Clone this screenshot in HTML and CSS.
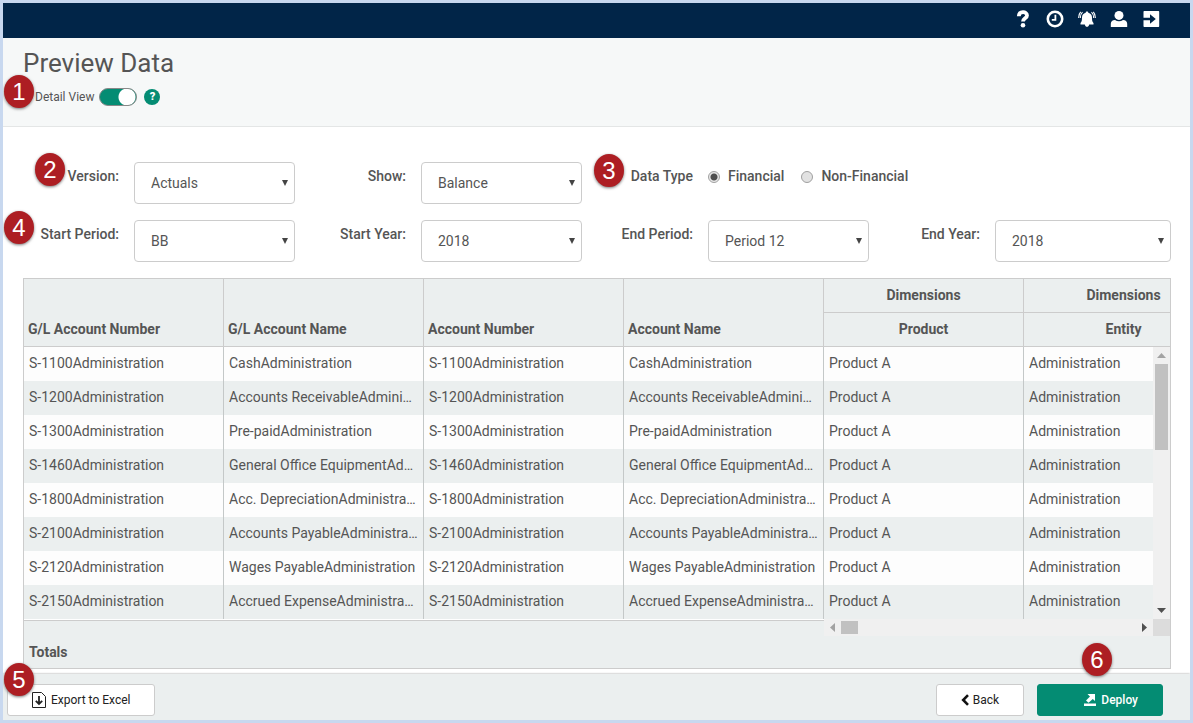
FILE: index.html
```
<!DOCTYPE html>
<html lang="en">
  <head>
    <meta charset="utf-8" />
    <meta name="viewport" content="width=device-width, initial-scale=1.0" />
    <title>Preview Data</title>
    <link rel="stylesheet" href="styles.css">
  </head>
  <body>
    <nav class="topbar">
      <a href="#" aria-label="Help">
        <svg viewBox="0 0 18 18"><path d="M4.800 6.200C5 1 13 1 13 5.400c0 3-4 2.900-4 6.200" fill="none" stroke="#fff" stroke-width="3.800"/><circle cx="9" cy="15.200" r="2.300"/></svg>
      </a>
      <a href="#" aria-label="History">
        <svg viewBox="0 0 18 18"><circle cx="9" cy="9" r="7.200" fill="none" stroke="#fff" stroke-width="2.600"/><path d="M9.400 4.800v5.100H5.800" fill="none" stroke="#fff" stroke-width="1.800"/></svg>
      </a>
      <a href="#" aria-label="Notifications">
        <svg viewBox="0 0 18 18"><path d="M9 1.500c.8 0 1.300.5 1.300 1.200 2.500.6 3.700 2.300 3.700 4.800 0 3 .3 4.200 1.500 5.500v1.500H11.200c-.3 1.500-1.200 2.300-2.200 2.300s-1.900-.8-2.200-2.300H2.500V13C3.700 11.700 4 10.500 4 7.500 4 5 5.200 3.300 7.700 2.700c0-.7.5-1.200 1.300-1.200z"/><path d="M4.500 2.200C2.900 3.600 2.300 5.600 2.300 8M2.700 1.800C1.200 3.300.6 5.500.7 8M13.500 2.200c1.600 1.400 2.200 3.400 2.200 5.800M15.300 1.800c1.500 1.500 2.100 3.700 2 6.200" fill="none" stroke="#fff" stroke-width="1.100"/></svg>
      </a>
      <a href="#" aria-label="Account">
        <svg viewBox="0 0 18 18"><circle cx="9" cy="5.400" r="4.500"/><path d="M.8 17v-3.200C.8 11.600 2.500 10 5 10c2.300 1.600 5.700 1.600 8 0 2.500 0 4.200 1.600 4.200 3.800V17z"/></svg>
      </a>
      <a href="#" aria-label="Sign out">
        <svg viewBox="0 0 18 18"><path d="M2.500 1h13.700c.6 0 1 .4 1 1v14c0 .6-.4 1-1 1H2.500c-.6 0-1-.4-1-1V2c0-.6.4-1 1-1z"/><path d="M0 7.800h8V4.200L13.800 9 8 13.800v-3.600H0z" fill="#012548"/></svg>
      </a>
    </nav>

    <header class="page-header">
      <h1>Preview Data</h1>
      <div class="detail">
        <label for="detail-view">Detail View</label>
        <input type="checkbox" id="detail-view" class="toggle" checked />
        <button type="button" class="help" aria-label="About detail view">?</button>
      </div>
      <span class="step step-1">1</span>
    </header>

    <main class="content">
      <form class="filters">
        <div class="field">
          <label for="version">Version:</label>
          <div class="picker"><select id="version"><option>Actuals</option></select></div>
        </div>
        <div class="field">
          <label for="show">Show:</label>
          <div class="picker"><select id="show"><option>Balance</option></select></div>
        </div>
        <div class="field field-type" role="radiogroup" aria-labelledby="data-type">
          <span class="caption" id="data-type">Data Type</span>
          <div class="radios">
            <input type="radio" name="type" id="financial" checked /><label for="financial">Financial</label>
            <input type="radio" name="type" id="non-financial" /><label for="non-financial">Non-Financial</label>
          </div>
        </div>
        <div class="field">
          <label for="start-period">Start Period:</label>
          <div class="picker"><select id="start-period"><option>BB</option></select></div>
        </div>
        <div class="field">
          <label for="start-year">Start Year:</label>
          <div class="picker"><select id="start-year"><option>2018</option></select></div>
        </div>
        <div class="field">
          <label for="end-period">End Period:</label>
          <div class="picker"><select id="end-period"><option>Period 12</option></select></div>
        </div>
        <div class="field field-wide">
          <label for="end-year">End Year:</label>
          <div class="picker"><select id="end-year"><option>2018</option></select></div>
        </div>
      </form>

      <section class="grid">
        <div class="grid-view">
          <table>
            <thead>
              <tr>
                <th rowspan="2">G/L Account Number</th>
                <th rowspan="2">G/L Account Name</th>
                <th rowspan="2">Account Number</th>
                <th rowspan="2">Account Name</th>
                <th class="dim">Dimensions</th>
                <th class="dim">Dimensions</th>
              </tr>
              <tr>
                <th class="dim">Product</th>
                <th class="dim">Entity</th>
              </tr>
            </thead>
            <tbody>
              <tr><td>S-1100Administration</td><td>CashAdministration</td><td>S-1100Administration</td><td>CashAdministration</td><td>Product A</td><td>Administration</td></tr>
              <tr><td>S-1200Administration</td><td>Accounts ReceivableAdministration</td><td>S-1200Administration</td><td>Accounts ReceivableAdministration</td><td>Product A</td><td>Administration</td></tr>
              <tr><td>S-1300Administration</td><td>Pre-paidAdministration</td><td>S-1300Administration</td><td>Pre-paidAdministration</td><td>Product A</td><td>Administration</td></tr>
              <tr><td>S-1460Administration</td><td>General Office EquipmentAdministration</td><td>S-1460Administration</td><td>General Office EquipmentAdministration</td><td>Product A</td><td>Administration</td></tr>
              <tr><td>S-1800Administration</td><td>Acc. DepreciationAdministration</td><td>S-1800Administration</td><td>Acc. DepreciationAdministration</td><td>Product A</td><td>Administration</td></tr>
              <tr><td>S-2100Administration</td><td>Accounts PayableAdministration</td><td>S-2100Administration</td><td>Accounts PayableAdministration</td><td>Product A</td><td>Administration</td></tr>
              <tr><td>S-2120Administration</td><td>Wages PayableAdministration</td><td>S-2120Administration</td><td>Wages PayableAdministration</td><td>Product A</td><td>Administration</td></tr>
              <tr><td>S-2150Administration</td><td>Accrued ExpenseAdministration</td><td>S-2150Administration</td><td>Accrued ExpenseAdministration</td><td>Product A</td><td>Administration</td></tr>
            </tbody>
          </table>
          <div class="vscroll">
            <svg viewBox="0 0 17 17"><path d="M4 11l4.500-5 4.500 5z" fill="#a3a3a3"/></svg>
            <div class="vthumb"></div>
            <svg class="end" viewBox="0 0 17 17"><path d="M4 6h9l-4.500 5z" fill="#505050"/></svg>
          </div>
        </div>
        <div class="hrow">
          <div class="frozen"></div>
          <div class="hscroll">
            <svg viewBox="0 0 17 17"><path d="M11 4v9L6 8.500z" fill="#a3a3a3"/></svg>
            <div class="hthumb"></div>
            <svg class="end" viewBox="0 0 17 17"><path d="M6 4v9l5-4.500z" fill="#505050"/></svg>
          </div>
          <div class="corner"></div>
        </div>
        <div class="totals">Totals</div>
      </section>
      <span class="step step-2">2</span>
      <span class="step step-3">3</span>
      <span class="step step-4">4</span>
    </main>

    <footer class="actions">
      <button type="button" class="btn export">
        <svg width="14" height="16" viewBox="0 0 14 16" fill="none" stroke="#222"><path d="M.5.500h9l4 4v11H.5z"/><path d="M7 4v8M3.800 8.800L7 12l3.200-3.200" stroke-width="1.800"/></svg>
        Export to Excel
      </button>
      <button type="button" class="btn back">
        <svg width="8" height="12" viewBox="0 0 8 12" fill="none" stroke="#111" stroke-width="2.600"><path d="M7 1.200L2.200 6 7 10.800"/></svg>
        Back
      </button>
      <button type="button" class="btn deploy">
        <svg width="14" height="14" viewBox="0 0 14 14" fill="#fff"><path d="M1 10.500h12v2.500H1z"/><path d="M4.500 1H12v7L9.800 5.900 5.500 9.800 3 7.500l4-4z"/></svg>
        Deploy
      </button>
      <span class="step step-5">5</span>
      <span class="step step-6">6</span>
    </footer>
  </body>
</html>
```
FILE: styles.css
```
* {
  box-sizing: border-box;
}
body {
  margin: 0;
  min-height: 100vh;
  display: flex;
  flex-direction: column;
  border: 3px solid #c8d8ef;
  background: #fff;
  color: #555;
  font-family: Roboto, "Liberation Sans", sans-serif;
  font-size: 14px;
  line-height: 20px;
}
button,
select {
  font: inherit;
  color: inherit;
}

/* top bar */
.topbar {
  height: 35px;
  display: flex;
  align-items: center;
  justify-content: flex-end;
  gap: 14px;
  padding: 0 30px 4px 0;
  background: #012548;
}
.topbar a,
.topbar svg {
  display: block;
  width: 18px;
  height: 18px;
  fill: #fff;
}

/* page header */
.page-header {
  position: relative;
  height: 89px;
  padding: 9px 20px 0;
  background: #f6f8f8;
  border-bottom: 1px solid #e4e6e6;
}
h1 {
  margin: 0;
  font-size: 26px;
  font-weight: 400;
  line-height: 32px;
}
.detail {
  display: flex;
  align-items: center;
  margin-top: 8px;
  padding-left: 12px;
  font-size: 12px;
}
.toggle {
  appearance: none;
  width: 38px;
  height: 18px;
  margin: 0 7px 0 5px;
  border: 1px solid #888;
  border-radius: 9px;
  background: radial-gradient(circle at 27px 8px, #fff 8px, transparent 9px) #048c73;
}
.help {
  width: 16px;
  height: 16px;
  padding: 0;
  border: 0;
  border-radius: 50%;
  background: #048c73;
  color: #fff;
  font-size: 11px;
  font-weight: 900;
  line-height: 16px;
}

/* filters */
.content {
  position: relative;
  flex: 1;
  padding: 35px 19px 5px 20px;
}
.filters {
  display: grid;
  grid-template-columns: 272fr 287fr 287fr 302fr;
  gap: 16px 0;
  margin-bottom: 16px;
}
.field {
  display: flex;
  justify-content: flex-end;
  gap: 15px;
}
.field > label,
.caption,
.radios {
  margin-top: 4px;
  font-weight: 500;
}
.field-type {
  grid-column: 3 / 5;
}
.picker {
  position: relative;
  width: 161px;
}
.field-wide .picker {
  width: 176px;
}
.picker::after {
  content: "";
  position: absolute;
  top: 18px;
  right: 7px;
  border: 3px solid transparent;
  border-top: 6px solid #444;
  border-bottom: 0;
  pointer-events: none;
}
select {
  appearance: none;
  display: block;
  width: 100%;
  height: 42px;
  padding: 0 16px;
  border: 1px solid #ccc;
  border-radius: 4px;
  background: #fff;
}
.radios {
  display: flex;
  align-items: center;
  align-self: flex-start;
  width: 463px;
}
.radios input {
  appearance: none;
  width: 12px;
  height: 12px;
  margin: 2px 8px 0 0;
  border: 1px solid #a0a0a0;
  border-radius: 50%;
  background: #e2e2e2;
}
.radios input:checked {
  background: radial-gradient(circle, #505050 3px, #e8e8e8 4px);
}
.radios label {
  margin-right: 17px;
}

/* data grid */
.grid {
  border: 1px solid #ccc;
  background: #ebefef;
}
.grid-view {
  position: relative;
  overflow: hidden;
}
table {
  width: 1200px;
  table-layout: fixed;
  border-spacing: 0;
}
th,
td {
  height: 34px;
  padding: 0 5px 2px;
  border-right: 1px solid #c4c8c8;
  text-align: left;
  overflow: hidden;
  white-space: nowrap;
  text-overflow: ellipsis;
}
th {
  padding: 0 4px 7px;
  border-right-color: #ccc;
  border-bottom: 1px solid #ccc;
  font-weight: 700;
  vertical-align: bottom;
}
.dim {
  text-align: center;
}
tbody tr {
  background: #ebefef;
}
tbody tr:nth-child(odd) {
  background: #fdfdfd;
}
.vscroll {
  position: absolute;
  top: 68px;
  right: 0;
  bottom: 0;
  width: 17px;
  display: flex;
  flex-direction: column;
  background: #f0f0f0;
}
.vscroll svg,
.hscroll svg {
  display: block;
  width: 17px;
  height: 17px;
}
.vthumb {
  width: 13px;
  height: 86px;
  margin-left: 2px;
  background: #c1c1c1;
}
.vscroll .end {
  margin-top: auto;
}
.hrow {
  display: flex;
  height: 17px;
}
.frozen {
  width: 800px;
  height: 2px;
  border-top: 1px solid #fff;
  border-bottom: 1px solid #ccc;
}
.hscroll {
  flex: 1;
  display: flex;
  align-items: center;
  background: #f0f0f0;
}
.hthumb {
  width: 17px;
  height: 13px;
  background: #c1c1c1;
}
.hscroll .end {
  margin-left: auto;
}
.corner {
  width: 17px;
  background: #dcdcdc;
}
.totals {
  padding: 6px 5px;
  font-weight: 700;
}

/* bottom actions */
.actions {
  position: relative;
  display: flex;
  align-items: center;
  height: 46px;
  padding: 5px 27px 0 4px;
  background: #ebefef;
  box-shadow: 0 0 2px #999;
}
.btn {
  display: flex;
  align-items: center;
  gap: 4px;
  height: 32px;
  border: 1px solid #ccc;
  border-radius: 3px;
  background: #fff;
  color: #222;
  font-size: 12px;
}
.export {
  gap: 5px;
  padding: 0 24px;
}
.back {
  justify-content: center;
  width: 88px;
  margin-left: auto;
}
.deploy {
  justify-content: flex-end;
  width: 126px;
  margin-left: 13px;
  padding: 0 24px;
  border-color: #048c73;
  background: #048c73;
  color: #fff;
  font-weight: 500;
}

/* numbered callouts */
.step {
  position: absolute;
  z-index: 1;
  width: 30px;
  height: 33px;
  border-radius: 50%;
  background: #ad1e23;
  box-shadow: 0 1px 3px #777;
  color: #fff;
  font-family: "Liberation Sans", sans-serif;
  font-size: 24px;
  line-height: 33px;
  text-align: center;
}
.step-1 {
  left: 1px;
  top: 37px;
}
.step-2 {
  left: 32px;
  top: 26px;
}
.step-3 {
  left: 591px;
  top: 27px;
}
.step-4 {
  left: 1px;
  top: 84px;
}
.step-5 {
  left: 1px;
  top: -11px;
}
.step-6 {
  right: 78px;
  top: -31px;
}
```
